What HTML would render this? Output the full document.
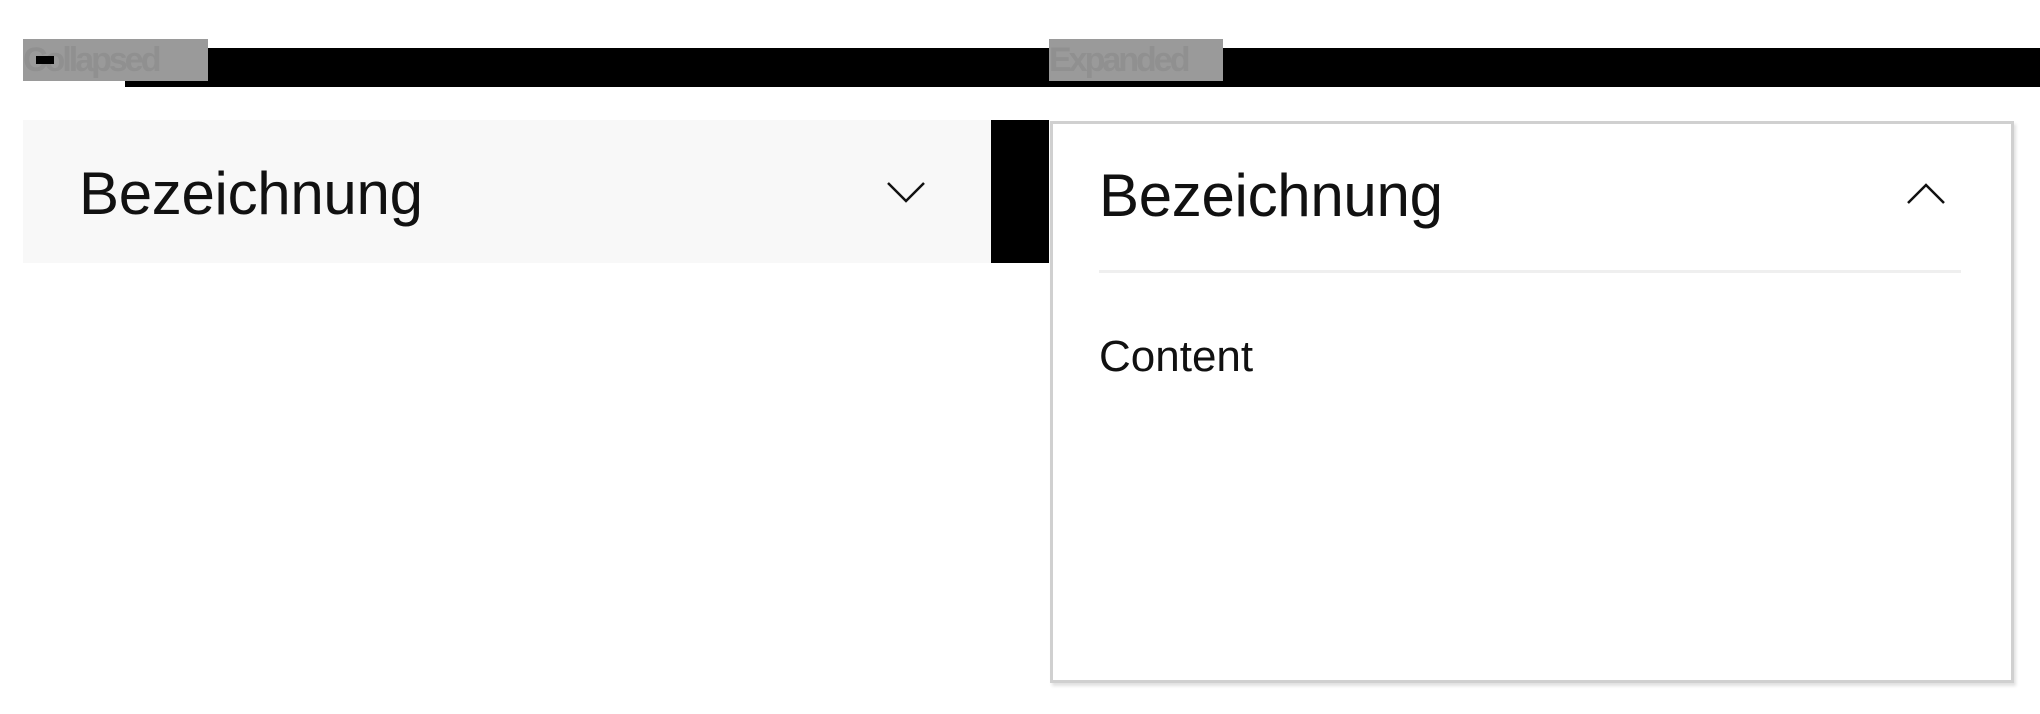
<!DOCTYPE html>
<html><head><meta charset="utf-8"><style>
body{margin:0;width:2040px;height:714px;background:#fff;position:relative;overflow:hidden;font-family:"Liberation Sans",sans-serif}
div,svg{position:absolute}
.lbl{background:#9a9a9a;color:#909090;font-weight:bold;font-size:34px;line-height:42px;overflow:hidden;letter-spacing:-3px}
.t{font-size:60px;color:#111;white-space:nowrap;line-height:1;letter-spacing:-0.3px}
</style></head><body>
<div style="left:125px;top:48px;width:1915px;height:39px;background:#000"></div>
<div class="lbl" style="left:23px;top:39px;width:185px;height:42px">Collapsed</div>
<div style="left:36px;top:56px;width:18px;height:8px;background:#000"></div>
<div class="lbl" style="left:1049px;top:39px;width:174px;height:42px">Expanded</div>

<div style="left:23px;top:120px;width:968px;height:143px;background:#f8f8f8"></div>
<div style="left:991px;top:120px;width:58px;height:143px;background:#000"></div>
<div class="t" style="left:79px;top:164px">Bezeichnung</div>
<svg style="left:885px;top:180px" width="42" height="26" viewBox="0 0 42 26"><path d="M3 3 L21 21 L39 3" fill="none" stroke="#111" stroke-width="2.5"/></svg>

<div style="left:1050px;top:121px;width:958px;height:556px;border:3px solid #d0d0d0;background:#fff;box-shadow:2px 3px 3px rgba(0,0,0,.12)"></div>
<div class="t" style="left:1099px;top:166px">Bezeichnung</div>
<svg style="left:1905px;top:180px" width="42" height="26" viewBox="0 0 42 26"><path d="M3 23 L21 5 L39 23" fill="none" stroke="#111" stroke-width="2.5"/></svg>
<div style="left:1099px;top:270px;width:862px;height:3px;background:#efefef"></div>
<div style="left:1099px;top:335px;font-size:44px;color:#111;line-height:1">Content</div>
</body></html>
